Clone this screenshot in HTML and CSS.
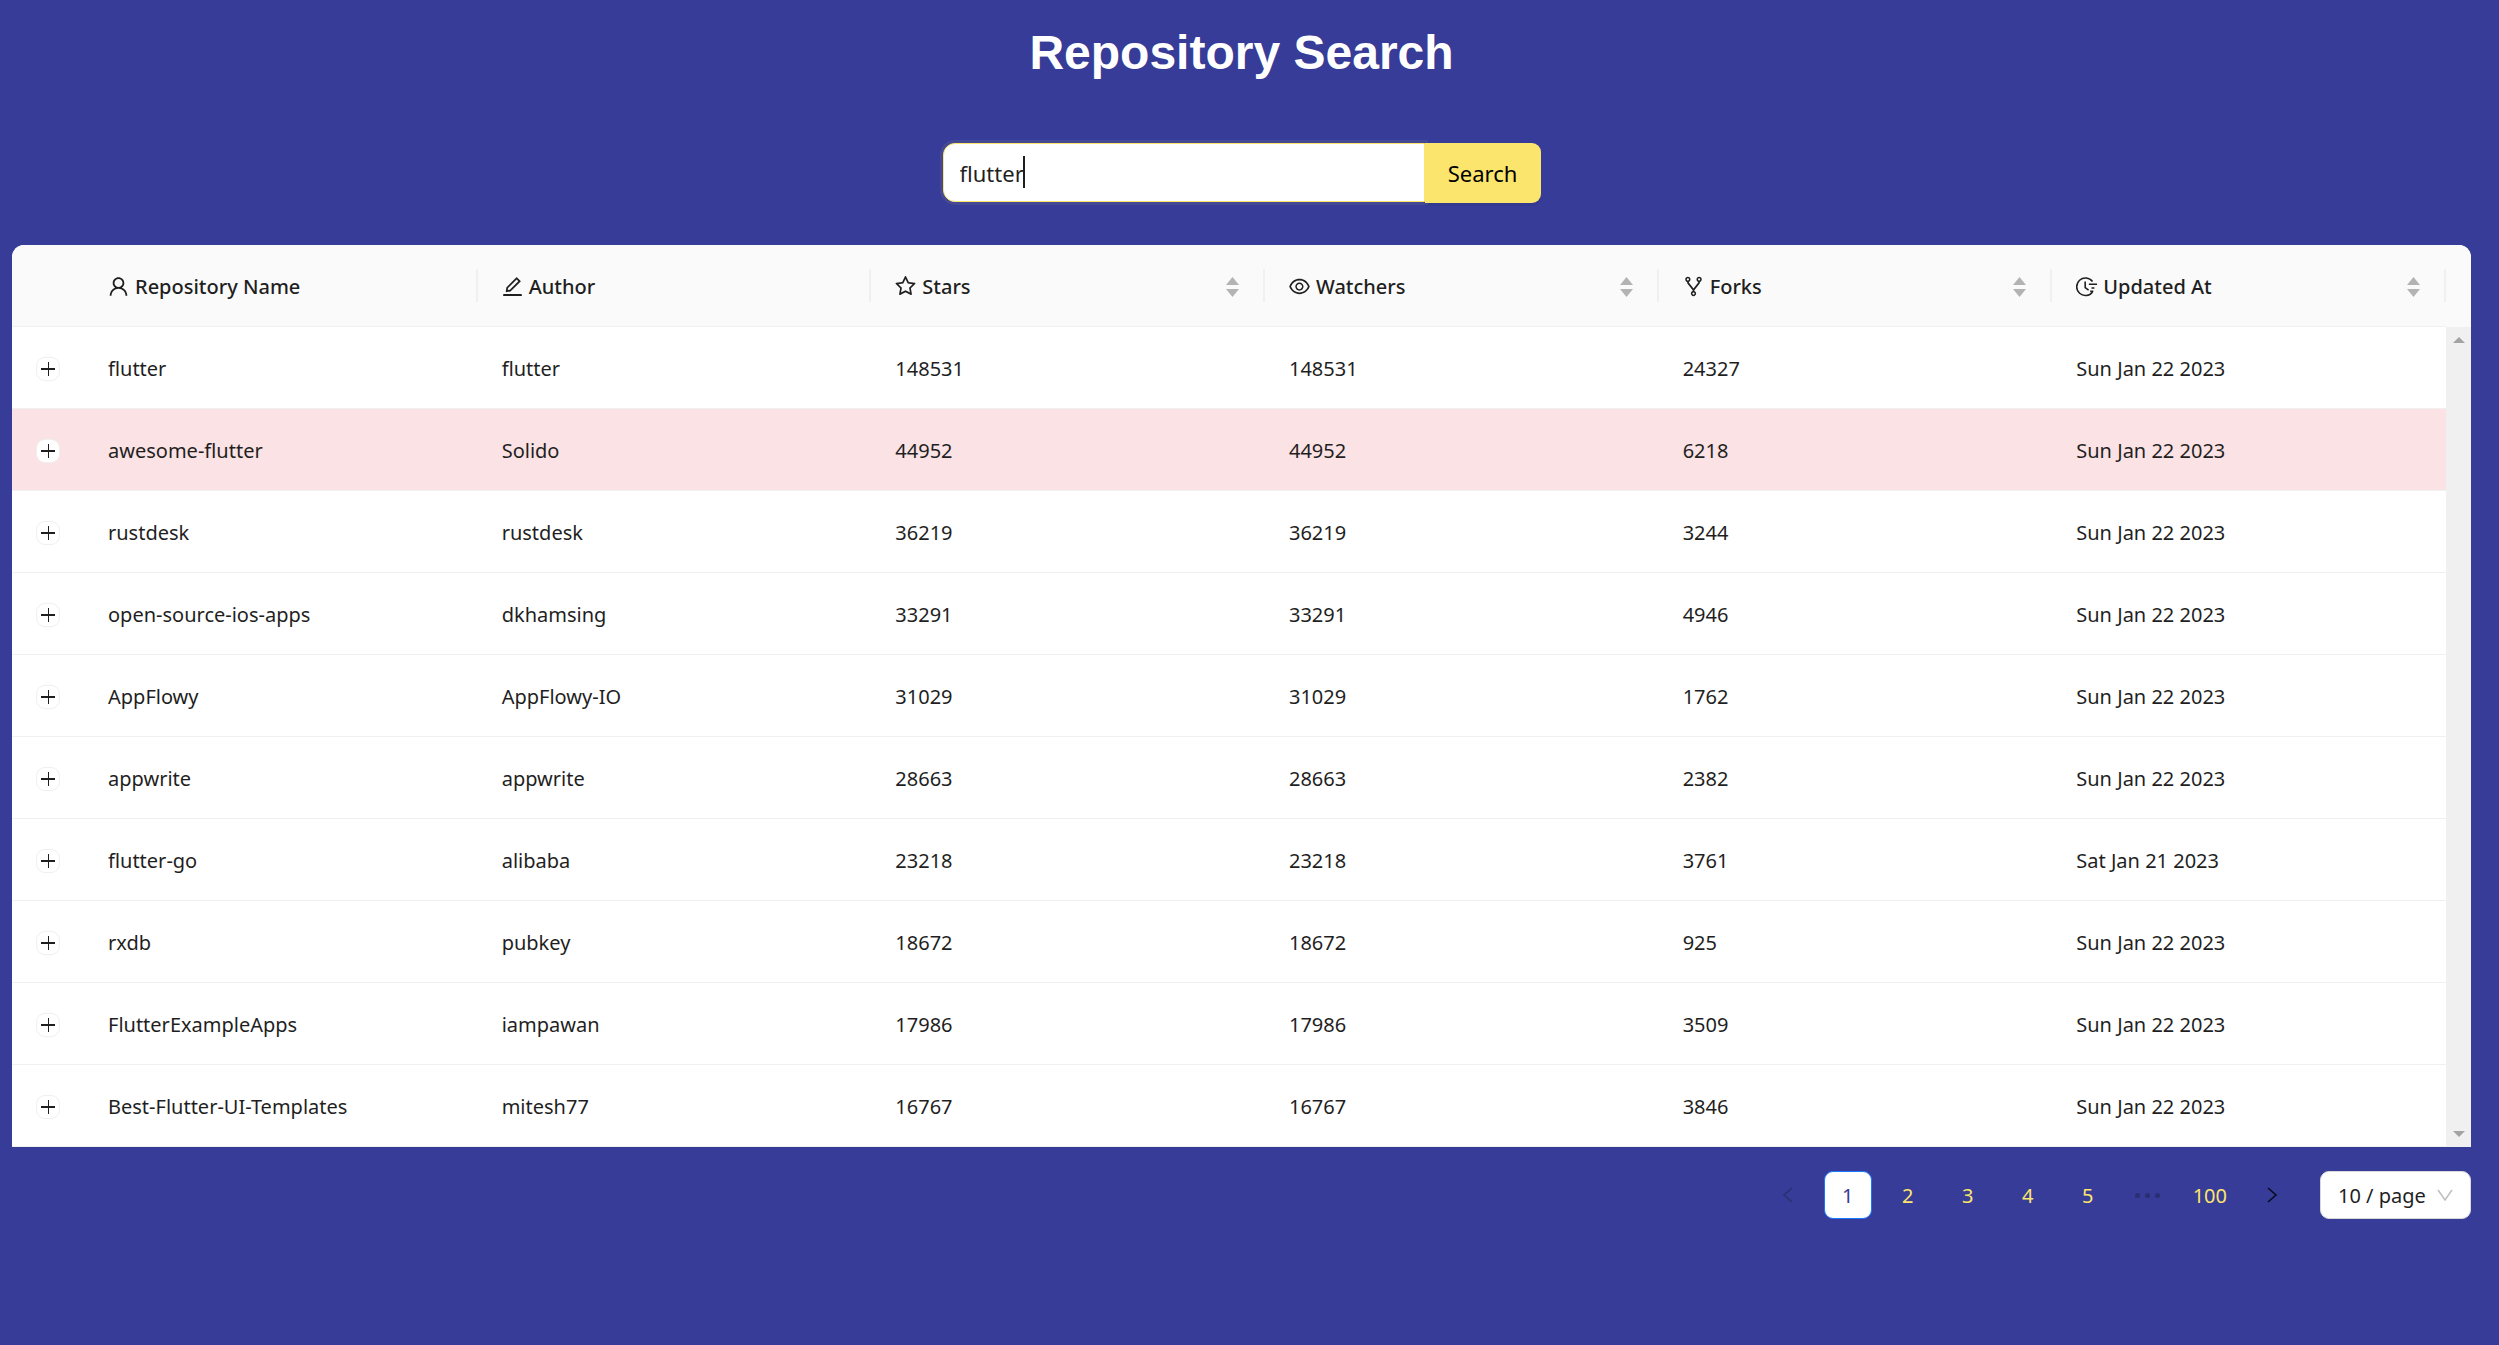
FILE: index.html
```html
<!DOCTYPE html>
<html lang="en">
<head>
<meta charset="utf-8">
<title>Repository Search</title>
<link rel="stylesheet" href="styles.css">
</head>
<body>
<svg class="sprite" aria-hidden="true">
  <symbol id="user" viewBox="64 64 896 896"><path d="M858.5 763.600a374 374 0 00-80.600-119.500 375.630 375.630 0 00-119.500-80.600c-.4-.2-.8-.3-1.200-.5C719.500 518 760 444.700 760 362c0-137-111-248-248-248S264 225 264 362c0 82.700 40.500 156 102.800 201.100-.4.2-.8.3-1.200.5-44.800 18.900-85 46-119.500 80.600a375.630 375.630 0 00-80.600 119.500A371.700 371.700 0 00136 901.800a8 8 0 008 8.200h60c4.400 0 7.900-3.500 8-7.800 2-77.200 33-149.500 87.800-204.300 56.700-56.700 132-87.900 212.200-87.900s155.500 31.200 212.200 87.900C779 752.700 810 825 812 902.200c.1 4.400 3.600 7.800 8 7.800h60a8 8 0 008-8.200c-1-47.800-10.900-94.300-29.500-138.200zM512 534c-45.900 0-89.100-17.900-121.600-50.400S340 407.900 340 362c0-45.900 17.900-89.100 50.400-121.600S466.100 190 512 190s89.100 17.900 121.600 50.400S684 316.100 684 362c0 45.900-17.900 89.100-50.400 121.600S557.900 534 512 534z"/></symbol>
  <symbol id="edit" viewBox="64 64 896 896"><path d="M257.700 752c2 0 4-.2 6-.5L431.900 722c2-.4 3.900-1.300 5.300-2.800l423.900-423.900a9.960 9.960 0 000-14.100L694.900 114.900c-1.900-1.900-4.400-2.900-7.100-2.900s-5.200 1-7.100 2.900L256.800 538.800c-1.500 1.500-2.400 3.300-2.800 5.300l-29.500 168.200a33.500 33.500 0 009.400 29.800c6.600 6.400 14.900 9.900 23.800 9.900zm67.400-174.400L687.800 215l73.300 73.300-362.700 362.600-88.900 15.700 15.600-89zM880 836H144c-17.700 0-32 14.300-32 32v36c0 4.400 3.600 8 8 8h784c4.400 0 8-3.600 8-8v-36c0-17.700-14.300-32-32-32z"/></symbol>
  <symbol id="star" viewBox="64 64 896 896"><path d="M908.100 352.800l-253.900-36.900L540.700 85.800c-3.100-6.300-8.200-11.400-14.500-14.500-15.800-7.800-35-1.300-42.900 14.500L369.800 315.900l-253.900 36.900c-7 1-13.400 4.300-18.300 9.300a32.050 32.050 0 00.6 45.300l183.700 179.100-43.400 252.900a31.950 31.950 0 0046.400 33.700L512 754l227.100 119.400c6.200 3.300 13.400 4.400 20.300 3.200 17.400-3 29.100-19.500 26.100-36.900l-43.400-252.900 183.700-179.100c5-4.900 8.300-11.300 9.300-18.300 2.700-17.500-9.500-33.700-27-36.300zM664.800 561.600l36.100 210.300L512 672.700 323.100 772l36.100-210.300-152.800-149L417.600 382 512 190.700 606.400 382l211.200 30.700-152.800 148.900z"/></symbol>
  <symbol id="eye" viewBox="64 64 896 896"><path d="M942.200 486.200C847.400 286.500 704.100 186 512 186c-192.200 0-335.400 100.500-430.200 300.300a60.300 60.300 0 000 51.500C176.600 737.500 319.900 838 512 838c192.200 0 335.400-100.500 430.200-300.300 7.700-16.200 7.700-35 0-51.500zM512 766c-161.300 0-279.400-81.800-362.700-254C232.600 339.800 350.700 258 512 258c161.300 0 279.400 81.800 362.700 254C791.500 684.200 673.400 766 512 766zm-4-430c-97.200 0-176 78.800-176 176s78.800 176 176 176 176-78.800 176-176-78.800-176-176-176zm0 288c-61.900 0-112-50.100-112-112s50.100-112 112-112 112 50.100 112 112-50.100 112-112 112z"/></symbol>
  <symbol id="fork" viewBox="64 64 896 896"><path d="M752 100c-61.800 0-112 50.200-112 112 0 47.700 29.900 88.500 72 104.600v27.600L512 601.400 312 344.200v-27.600c42.100-16.100 72-56.900 72-104.600 0-61.800-50.200-112-112-112s-112 50.200-112 112c0 50.600 33.800 93.500 80 107.300v34.400c0 9.700 3.300 19.300 9.300 27L476 672.300v33.600c-44.200 15-76 56.900-76 106.100 0 61.800 50.200 112 112 112s112-50.200 112-112c0-49.200-31.800-91-76-106.100v-33.600l226.700-291.600c6-7.700 9.300-17.300 9.300-27v-34.400c46.200-13.800 80-56.700 80-107.300 0-61.800-50.200-112-112-112zM224 212a48.010 48.010 0 0196 0 48.010 48.010 0 01-96 0zm336 600a48.010 48.010 0 01-96 0 48.010 48.010 0 0196 0zm192-552a48.010 48.010 0 010-96 48.010 48.010 0 010 96z"/></symbol>
  <symbol id="clock" viewBox="0 0 16 16"><path d="M12.600 4.200A6.700 6.700 0 1 0 12.600 12.200M7 4.200v4.600l2.600 1.900M9.800 6.300h6.200M11.800 9.100h2.200M10.800 11.600h2.400" fill="none" stroke="currentColor" stroke-width="1.200"/></symbol>
  <symbol id="sort" viewBox="0 0 13 20"><path d="M6.500 0l6.500 8H0zM0 12h13l-6.500 8z"/></symbol>
  <symbol id="left" viewBox="0 0 12 16"><path d="M10 1L2 8l8 7" fill="none" stroke="currentColor" stroke-width="1.600"/></symbol>
  <symbol id="right" viewBox="0 0 12 16"><path d="M2 1l8 7-8 7" fill="none" stroke="currentColor" stroke-width="1.600"/></symbol>
</svg>

<h1 class="title">Repository Search</h1>

<form class="search">
  <div class="field">
    <input class="search-input" type="text" value="flutter" aria-label="Repository">
    <span class="caret"></span>
  </div>
  <button class="search-button" type="button">Search</button>
</form>

<main class="results">
  <div class="table-wrap">
    <table class="table">
      <colgroup><col class="col-expand"><col><col><col><col><col><col><col class="col-bar"></colgroup>
      <thead>
        <tr>
          <th aria-label="Expand"></th>
          <th><div class="head"><svg class="icon"><use href="#user"/></svg>Repository Name</div></th>
          <th><div class="head"><svg class="icon"><use href="#edit"/></svg>Author</div></th>
          <th><div class="head"><svg class="icon"><use href="#star"/></svg>Stars<svg class="sort"><use href="#sort"/></svg></div></th>
          <th><div class="head"><svg class="icon"><use href="#eye"/></svg>Watchers<svg class="sort"><use href="#sort"/></svg></div></th>
          <th><div class="head"><svg class="icon"><use href="#fork"/></svg>Forks<svg class="sort"><use href="#sort"/></svg></div></th>
          <th><div class="head"><svg class="icon"><use href="#clock"/></svg>Updated At<svg class="sort"><use href="#sort"/></svg></div></th>
          <th class="bar-head"></th>
        </tr>
      </thead>
      <tbody>
        <tr><td><button class="expand" type="button" aria-label="Expand row"></button></td><td>flutter</td><td>flutter</td><td>148531</td><td>148531</td><td>24327</td><td>Sun Jan 22 2023</td><td class="bar" rowspan="10"><div class="bar-track"><span class="arrow-up"></span><span class="arrow-down"></span></div></td></tr>
        <tr class="hovered"><td><button class="expand" type="button" aria-label="Expand row"></button></td><td>awesome-flutter</td><td>Solido</td><td>44952</td><td>44952</td><td>6218</td><td>Sun Jan 22 2023</td></tr>
        <tr><td><button class="expand" type="button" aria-label="Expand row"></button></td><td>rustdesk</td><td>rustdesk</td><td>36219</td><td>36219</td><td>3244</td><td>Sun Jan 22 2023</td></tr>
        <tr><td><button class="expand" type="button" aria-label="Expand row"></button></td><td>open-source-ios-apps</td><td>dkhamsing</td><td>33291</td><td>33291</td><td>4946</td><td>Sun Jan 22 2023</td></tr>
        <tr><td><button class="expand" type="button" aria-label="Expand row"></button></td><td>AppFlowy</td><td>AppFlowy-IO</td><td>31029</td><td>31029</td><td>1762</td><td>Sun Jan 22 2023</td></tr>
        <tr><td><button class="expand" type="button" aria-label="Expand row"></button></td><td>appwrite</td><td>appwrite</td><td>28663</td><td>28663</td><td>2382</td><td>Sun Jan 22 2023</td></tr>
        <tr><td><button class="expand" type="button" aria-label="Expand row"></button></td><td>flutter-go</td><td>alibaba</td><td>23218</td><td>23218</td><td>3761</td><td>Sat Jan 21 2023</td></tr>
        <tr><td><button class="expand" type="button" aria-label="Expand row"></button></td><td>rxdb</td><td>pubkey</td><td>18672</td><td>18672</td><td>925</td><td>Sun Jan 22 2023</td></tr>
        <tr><td><button class="expand" type="button" aria-label="Expand row"></button></td><td>FlutterExampleApps</td><td>iampawan</td><td>17986</td><td>17986</td><td>3509</td><td>Sun Jan 22 2023</td></tr>
        <tr><td><button class="expand" type="button" aria-label="Expand row"></button></td><td>Best-Flutter-UI-Templates</td><td>mitesh77</td><td>16767</td><td>16767</td><td>3846</td><td>Sun Jan 22 2023</td></tr>
      </tbody>
    </table>
  </div>

  <nav class="pages" aria-label="Pages">
    <button class="page" type="button" aria-label="Previous page" disabled><svg class="chevron"><use href="#left"/></svg></button>
    <a class="page current" href="#1" aria-current="page">1</a>
    <a class="page" href="#2">2</a>
    <a class="page" href="#3">3</a>
    <a class="page" href="#4">4</a>
    <a class="page" href="#5">5</a>
    <span class="page dots"><i></i><i></i><i></i></span>
    <a class="page" href="#100">100</a>
    <button class="page" type="button" aria-label="Next page"><svg class="chevron"><use href="#right"/></svg></button>
    <div class="size">
      <select class="size-select" aria-label="Page size"><option>10 / page</option><option>20 / page</option><option>50 / page</option></select>
      <svg class="size-arrow" viewBox="0 0 16 12"><path d="M1 1l7 10 7-10" fill="none" stroke="currentColor" stroke-width="1.500"/></svg>
    </div>
  </nav>
</main>
</body>
</html>
```

FILE: styles.css
```css
* { box-sizing: border-box; }

body {
  margin: 0;
  padding: 0 28px 0 12px;
  min-height: 100vh;
  background: #363c97;
  color: #1f1f1f;
  font: 20px/33px "Noto Sans", "Open Sans", sans-serif;
}

.sprite { display: none; }

.title {
  margin: 0;
  padding-top: 24px;
  color: #fff;
  font: bold 48px/58px "Liberation Sans", Arial, sans-serif;
  text-align: center;
}

.search {
  display: flex;
  justify-content: center;
  align-items: flex-start;
  margin-top: 61px;
}

.field { position: relative; height: 59px; }

.search-input {
  width: 482px;
  height: 59px;
  padding: 0 16px;
  border: 1px solid #fae56e;
  border-radius: 12px 0 0 12px;
  outline: none;
  box-shadow: 0 0 0 3px rgba(250, 229, 110, 0.08);
  background: #fff;
  color: #1f1f1f;
  font: 22px/36px "Noto Sans", "Open Sans", sans-serif;
}

.caret {
  position: absolute;
  top: 13px;
  left: 80px;
  width: 2px;
  height: 32px;
  background: #1f1f1f;
}

.search-button {
  width: 116px;
  height: 60px;
  padding: 0;
  border: 0;
  border-radius: 0 9px 9px 0;
  box-shadow: 0 3px 0 rgba(0, 0, 0, 0.04);
  background: #fbe56d;
  color: #000;
  font: 22px/36px "Noto Sans", "Open Sans", sans-serif;
}

.results { margin-top: 42px; }

.table-wrap {
  overflow: hidden;
  border-radius: 12px 12px 0 0;
  background: #fff;
}

.table {
  width: 100%;
  border-collapse: separate;
  border-spacing: 0;
  table-layout: fixed;
}

.col-expand { width: 72px; }
.col-bar { width: 25px; }

th,
td {
  height: 82px;
  padding: 2px 24px 0;
  border-bottom: 1px solid #f0f0f0;
  text-align: left;
}

th {
  background: #fafafa;
  font-weight: 500;
  padding: 0;
}

.head {
  display: flex;
  align-items: center;
  gap: 6px;
  height: 33px;
  padding: 2px 24px 0;
  border-right: 2px solid #f0f0f0;
}

.icon { width: 21px; height: 21px; }
.sort { width: 13px; height: 20px; margin-left: auto; color: #b3b3b3; }
.icon,
.sort,
.chevron { fill: currentColor; }

th.bar-head { border-bottom-color: #fafafa; }

.hovered td:not(.bar) { background: #fbe2e4; }

.expand {
  display: block;
  width: 24px;
  height: 24px;
  padding: 0;
  border: 1px solid #f0f0f0;
  border-radius: 9px;
  background:
    linear-gradient(#1f1f1f, #1f1f1f) center / 14px 2px no-repeat,
    linear-gradient(#1f1f1f, #1f1f1f) 11px center / 1px 14px no-repeat,
    #fff;
}

td.bar {
  height: 1px;
  padding: 0;
  border: 0;
  background: #f0f0f0;
}

.bar-track {
  display: flex;
  flex-direction: column;
  align-items: center;
  justify-content: space-between;
  height: 100%;
  padding: 10px 0;
}

.arrow-up,
.arrow-down {
  border: 6px solid transparent;
  border-top-width: 0;
  border-bottom: 6px solid #a3a3a3;
}

.arrow-down { border-width: 6px 6px 0; border-color: #a3a3a3 transparent; }

.pages {
  display: flex;
  justify-content: flex-end;
  gap: 12px;
  margin-top: 24px;
}

.page {
  display: flex;
  align-items: center;
  justify-content: center;
  min-width: 48px;
  height: 48px;
  padding: 0 8px;
  border: 1px solid transparent;
  border-radius: 9px;
  background: transparent;
  color: #fbe56d;
  text-decoration: none;
}

.current { border-color: #1677ff; background: #fff; color: #363c97; }
button.page { color: #0a0b1d; }
button.page:disabled { color: #2b3072; }

.chevron { width: 12px; height: 16px; }

.dots { gap: 5px; }
.dots i { width: 5px; height: 5px; border-radius: 50%; background: #2a2f73; }

.size { position: relative; margin-left: 12px; }

.size-select {
  appearance: none;
  width: 151px;
  height: 48px;
  padding: 0 17px;
  border: 1px solid #d9d9d9;
  border-radius: 9px;
  background: #fff;
  color: #1f1f1f;
  font: inherit;
}

.size-arrow {
  position: absolute;
  top: 18px;
  right: 18px;
  width: 16px;
  height: 12px;
  color: #bfbfbf;
  pointer-events: none;
}
```
